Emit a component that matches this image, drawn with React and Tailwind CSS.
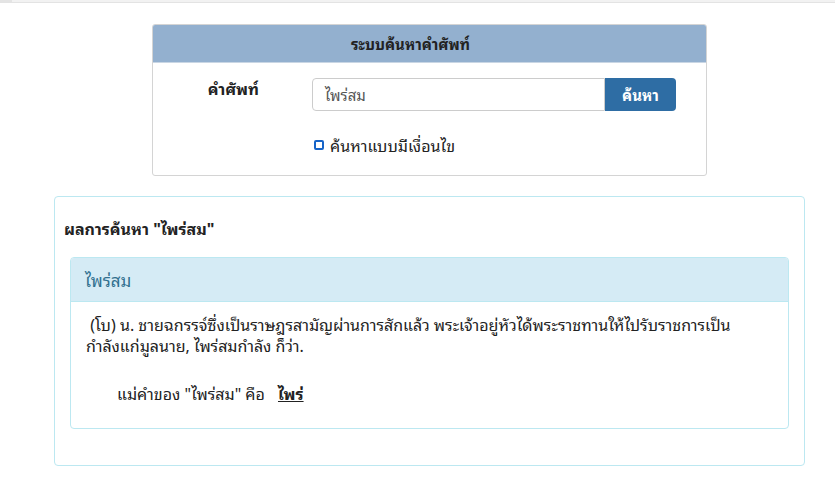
const FONT = '"Noto Sans Thai Looped", "Noto Serif Thai", Loma, Garuda, Tahoma, "DejaVu Sans", "Noto Sans", sans-serif';

export default function App() {
  return (
    <div className="w-[835px] h-[488px] bg-white overflow-hidden" style={{ fontFamily: FONT }}>
      {/* browser strip */}
      <div className="h-[3px] bg-[#f2f2f2] border-b border-[#e3e3e3] flex">
        <div className="w-[12px] bg-[#e4e4e4]" />
      </div>

      {/* search box */}
      <div className="mt-[21px] ml-[152px] w-[555px] h-[152px] border border-[#d4d4d4] rounded-[3px] overflow-hidden">
        <div className="h-[38px] bg-[#93b0cf] border-b border-[#c9d6e4] flex items-center justify-center pr-[38px] text-[15px] font-bold text-[#222]">
          ระบบค้นหาคำศัพท์
        </div>
        <div className="flex pt-[15px]">
          <div className="w-[159px] flex justify-end pr-[53px] -mt-[2px] text-[16px] font-bold text-[#222]">คำศัพท์</div>
          <div className="flex flex-col">
            <div className="flex h-[33px]">
              <div className="w-[293px] border border-[#cccccc] rounded-l-[4px] flex items-center pl-[12px] text-[15px] text-[#555]">ไพร่สม</div>
              <div className="w-[71px] bg-[#2e6da4] rounded-r-[4px] flex items-center justify-center text-[15px] font-bold text-white">ค้นหา</div>
            </div>
            <div className="flex items-center mt-[22px] ml-[2px] text-[16px] text-[#222]">
              <div className="w-[10px] h-[10px] border-2 border-[#1664c8] rounded-[2px] mr-[6px]" />
              ค้นหาแบบมีเงื่อนไข
            </div>
          </div>
        </div>
      </div>

      {/* result panel */}
      <div className="mt-[20px] ml-[54px] w-[751px] h-[270px] border border-[#bce8f1] rounded-[4px] px-[15px]">
        <div className="pt-[19px] -ml-[6px] text-[16px] font-bold text-[#222]">ผลการค้นหา "ไพร่สม"</div>
        <div className="mt-[17px] border border-[#bce8f1] rounded-[4px] overflow-hidden h-[172px]">
          <div className="h-[44px] bg-[#d5ebf5] border-b border-[#bce8f1] flex items-center pl-[14px] text-[17px] text-[#31708f]">
            ไพร่สม
          </div>
          <div className="pl-[15px] pr-[20px] pt-[12px] text-[16px] leading-[21px] text-[#222]">
            <p>&nbsp;(โบ) น. ชายฉกรรจ์ซึ่งเป็นราษฎรสามัญผ่านการสักแล้ว พระเจ้าอยู่หัวได้พระราชทานให้ไปรับราชการเป็น<br />กำลังแก่มูลนาย, ไพร่สมกำลัง ก็ว่า.</p>
            <p className="mt-[27px] pl-[31px]">
              แม่คำของ "ไพร่สม" คือ <span className="ml-[9px] font-bold underline">ไพร่</span>
            </p>
          </div>
        </div>
      </div>
    </div>
  );
}
